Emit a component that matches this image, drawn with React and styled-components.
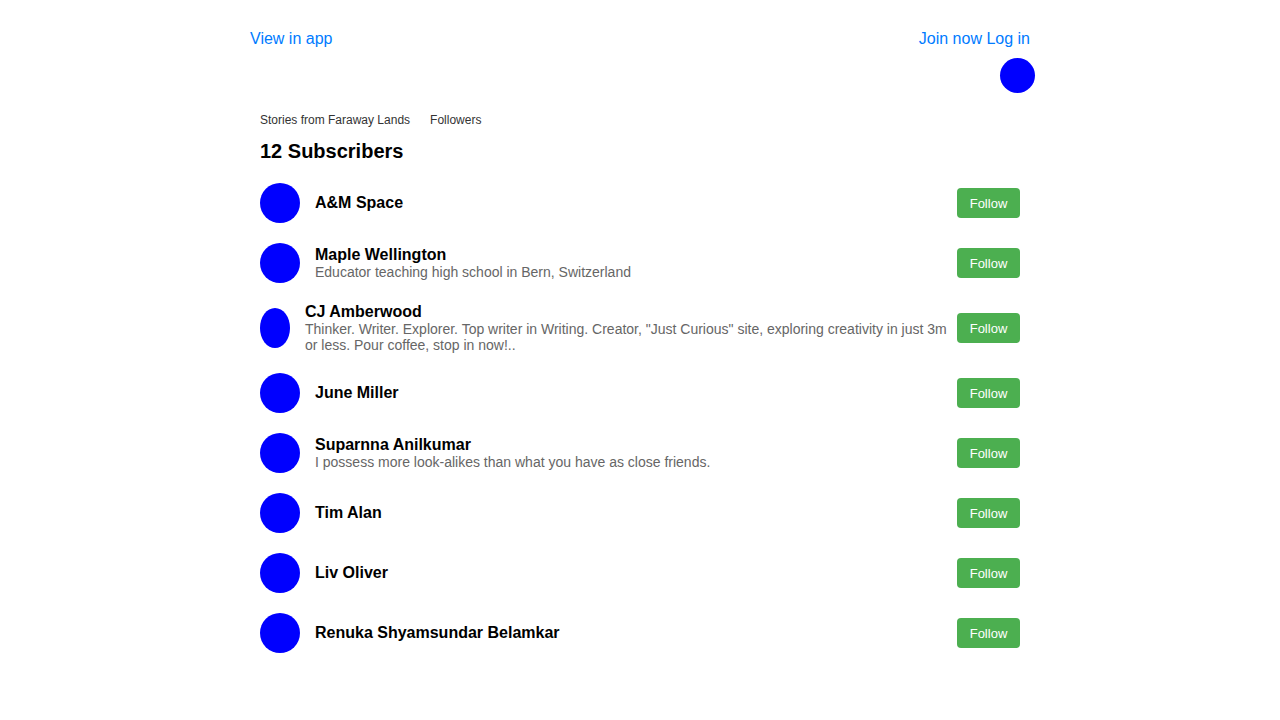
import React from 'react'
import styled, { createGlobalStyle } from 'styled-components'

const subscribers = [
    { name: 'A&M Space' },
    { name: 'Maple Wellington', bio: 'Educator teaching high school in Bern, Switzerland' },
    { name: 'CJ Amberwood', bio: 'Thinker. Writer. Explorer. Top writer in Writing. Creator, "Just Curious" site, exploring creativity in just 3m or less. Pour coffee, stop in now!..' },
    { name: 'June Miller' },
    { name: 'Suparnna Anilkumar', bio: 'I possess more look-alikes than what you have as close friends.' },
    { name: 'Tim Alan' },
    { name: 'Liv Oliver' },
    { name: 'Renuka Shyamsundar Belamkar' },
]

export default () => {
    return (
        <Page>
            <GlobalStyle />
            <Header>
                <LinkStyled href='#'>View in app</LinkStyled>
                <div>
                    <LinkStyled href='#'>Join now</LinkStyled> <LinkStyled href='#'>Log in</LinkStyled>
                </div>
            </Header>
            <UserBar>
                <Avatar size={35} />
            </UserBar>
            <Main>
                <Tabs>
                    <span>Stories from Faraway Lands</span>
                    <span>Followers</span>
                </Tabs>
                <Title>12 Subscribers</Title>
                {subscribers.map(s => (
                    <Row key={s.name}>
                        <Avatar size={40} gap={15} />
                        <Info>
                            <Name>{s.name}</Name>
                            {s.bio && <Bio>{s.bio}</Bio>}
                        </Info>
                        <Button>Follow</Button>
                    </Row>
                ))}
            </Main>
        </Page>
    )
}

const GlobalStyle = createGlobalStyle`
body{
    margin:0;
    background:#fff;
    font-family:"Liberation Sans", Arial, sans-serif;
}
`

const Page = styled.div`
width:790px;
margin:0 auto;
`

const Header = styled.div`
display:flex;
justify-content:space-between;
align-items:center;
padding:30px 5px 0;
font-size:16px;
line-height:18px;
`

const LinkStyled = styled.a`
color:#007bff;
text-decoration:none;
`

const UserBar = styled.div`
display:flex;
justify-content:flex-end;
margin-top:10px;
`

const Avatar = styled.div`
width:${p => p.size}px;
height:${p => p.size}px;
border-radius:50%;
background:#0000ff;
margin-right:${p => p.gap || 0}px;
`

const Main = styled.div`
padding:0 15px;
`

const Tabs = styled.div`
display:flex;
gap:20px;
margin-top:20px;
font-size:12px;
line-height:14px;
color:#333;
`

const Title = styled.h2`
margin:13px 0 10px;
font-size:20px;
line-height:23px;
font-weight:bold;
color:#000;
`

const Row = styled.div`
display:flex;
align-items:center;
padding:10px 0;
`

const Info = styled.div`
flex-grow:1;
display:flex;
flex-direction:column;
margin-right:10px;
`

const Name = styled.span`
font-size:16px;
line-height:18px;
font-weight:bold;
color:#000;
`

const Bio = styled.span`
font-size:14px;
line-height:16px;
color:#666;
`

const Button = styled.button`
flex-shrink:0;
width:63px;
height:30px;
background-color:#4CAF50;
color:white;
border:none;
border-radius:4px;
font-family:"Liberation Sans", Arial, sans-serif;
font-size:13px;
cursor:pointer;
`
